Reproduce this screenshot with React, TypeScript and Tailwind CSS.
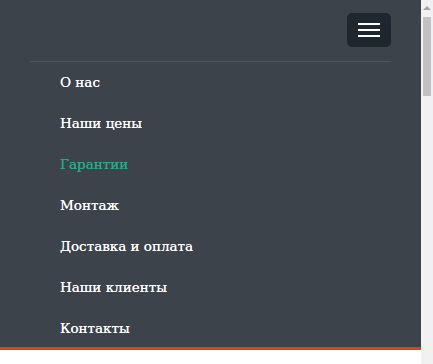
const links = [
  { label: "О нас" },
  { label: "Наши цены" },
  { label: "Гарантии", active: true },
  { label: "Монтаж" },
  { label: "Доставка и оплата" },
  { label: "Наши клиенты" },
  { label: "Контакты" },
]

export default function App() {
  return (
    <div className="flex h-[364px] w-[433px] overflow-hidden bg-white">
      <div className="flex w-[421px] flex-col">
        <nav className="h-[347px] bg-[#3d434b] px-[30px]">
          <div className="flex justify-end pt-[13px] pb-[14px]">
            <button className="flex h-[34px] w-[44px] flex-col items-center justify-center gap-[4px] rounded-[5px] bg-[#1e2630]">
              <span className="block h-[2px] w-[22px] bg-white" />
              <span className="block h-[2px] w-[22px] bg-white" />
              <span className="block h-[2px] w-[22px] bg-white" />
            </button>
          </div>
          <ul className="border-t border-[#4f565e] pt-[9px]">
            {links.map((l) => (
              <li key={l.label}>
                <a
                  className={`block h-[41px] pl-[30px] text-[13.5px] font-normal leading-[22px] [text-shadow:0_0_0.4px_currentColor] ${
                    l.active ? "text-[#2ba88a]" : "text-white"
                  }`}
                  style={{ fontFamily: '"DejaVu Serif", serif' }}
                >
                  {l.label}
                </a>
              </li>
            ))}
          </ul>
        </nav>
        <div className="h-[3px] bg-[#d2481a]" />
        <div className="flex-1 bg-white" />
      </div>
      <div className="flex w-[12px] flex-col items-center bg-[#f1f1f1]">
        <div className="mt-[6px] h-0 w-0 border-x-[4px] border-b-[4px] border-x-transparent border-b-[#a3a3a3]" />
        <div className="mt-[7px] h-[79px] w-[8px] bg-[#c1c1c1]" />
      </div>
    </div>
  )
}
